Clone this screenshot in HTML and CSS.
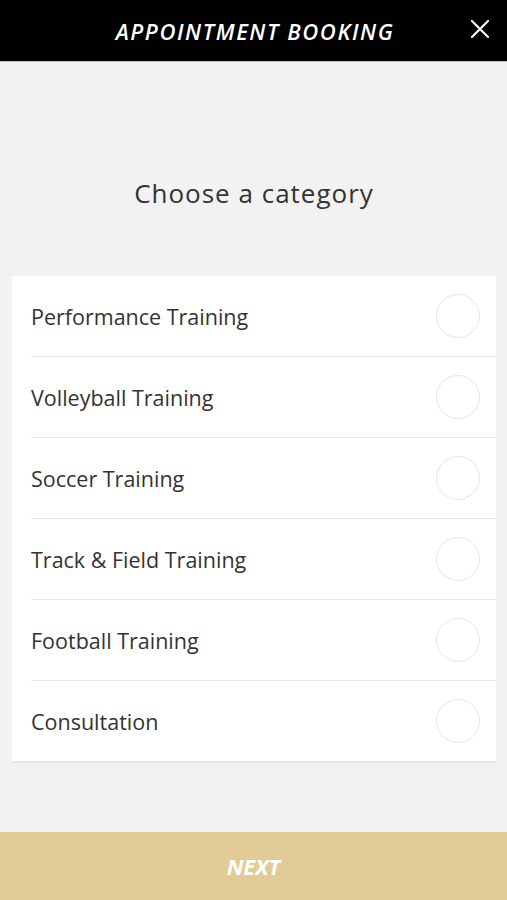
FILE: index.html
```html
<!DOCTYPE html>
<html lang="en">
<head>
    <meta charset="UTF-8">
    <meta name="viewport" content="width=device-width, initial-scale=1.0">
    <title>Appointment Booking</title>
    <link rel="stylesheet" href="styles.css">
</head>
<body>

<div class="app">
    <header class="topbar">
        <h1>APPOINTMENT BOOKING</h1>
        <button class="close" aria-label="Close">
            <svg width="20" height="20" viewBox="0 0 20 20">
                <path d="M2 2 L18 18 M18 2 L2 18" stroke="#fff" stroke-width="2.2" stroke-linecap="round"/>
            </svg>
        </button>
    </header>

    <main class="content">
        <h2 class="heading">Choose a category</h2>
        <ul class="category-list">
            <li class="category"><span>Performance Training</span><span class="radio"></span></li>
            <li class="category"><span>Volleyball Training</span><span class="radio"></span></li>
            <li class="category"><span>Soccer Training</span><span class="radio"></span></li>
            <li class="category"><span>Track &amp; Field Training</span><span class="radio"></span></li>
            <li class="category"><span>Football Training</span><span class="radio"></span></li>
            <li class="category"><span>Consultation</span><span class="radio"></span></li>
        </ul>
    </main>

    <button class="next">NEXT</button>
</div>

</body>
</html>
```

FILE: styles.css
```css
body {
    margin: 0;
    padding: 0;
    font-family: "Open Sans", Arial, sans-serif;
    background-color: #f2f2f2;
}
.app {
    display: flex;
    flex-direction: column;
    height: 900px;
}
.topbar {
    height: 61px;
    background-color: #000;
    border-bottom: 1px solid #bdbdbd;
    display: flex;
    align-items: center;
    justify-content: center;
    position: relative;
}
.topbar h1 {
    margin: 0 0 0 3px;
    color: #fff;
    font-size: 22px;
    font-weight: 600;
    font-style: italic;
    letter-spacing: 1.6px;
}
.close {
    position: absolute;
    right: 17px;
    top: 19px;
    background: none;
    border: none;
    padding: 0;
    width: 20px;
    height: 20px;
    cursor: pointer;
}
.close svg {
    display: block;
}
.content {
    flex: 1;
    padding: 0 11px 0 12px;
}
.heading {
    margin: 113px 0 0;
    height: 101px;
    text-align: center;
    font-size: 26px;
    font-weight: 400;
    color: #333;
    letter-spacing: 1px;
}
.category-list {
    list-style: none;
    margin: 0;
    padding: 0 0 0 19px;
    background-color: #fff;
    border-bottom: 2px solid #e6e6e6;
}
.category {
    height: 80px;
    display: flex;
    align-items: center;
    justify-content: space-between;
    padding-right: 16px;
    border-bottom: 1px solid #e6e6e6;
    font-size: 21.5px;
    color: #333;
}
.category:last-child {
    border-bottom: none;
}
.radio {
    width: 42px;
    height: 42px;
    border: 1.5px solid #e6e6e6;
    border-radius: 50%;
}
.next {
    height: 68px;
    border: none;
    background-color: #e3cb96;
    color: #fff;
    font-family: "Open Sans", Arial, sans-serif;
    font-size: 22px;
    font-weight: 700;
    font-style: italic;
    cursor: pointer;
}
```
